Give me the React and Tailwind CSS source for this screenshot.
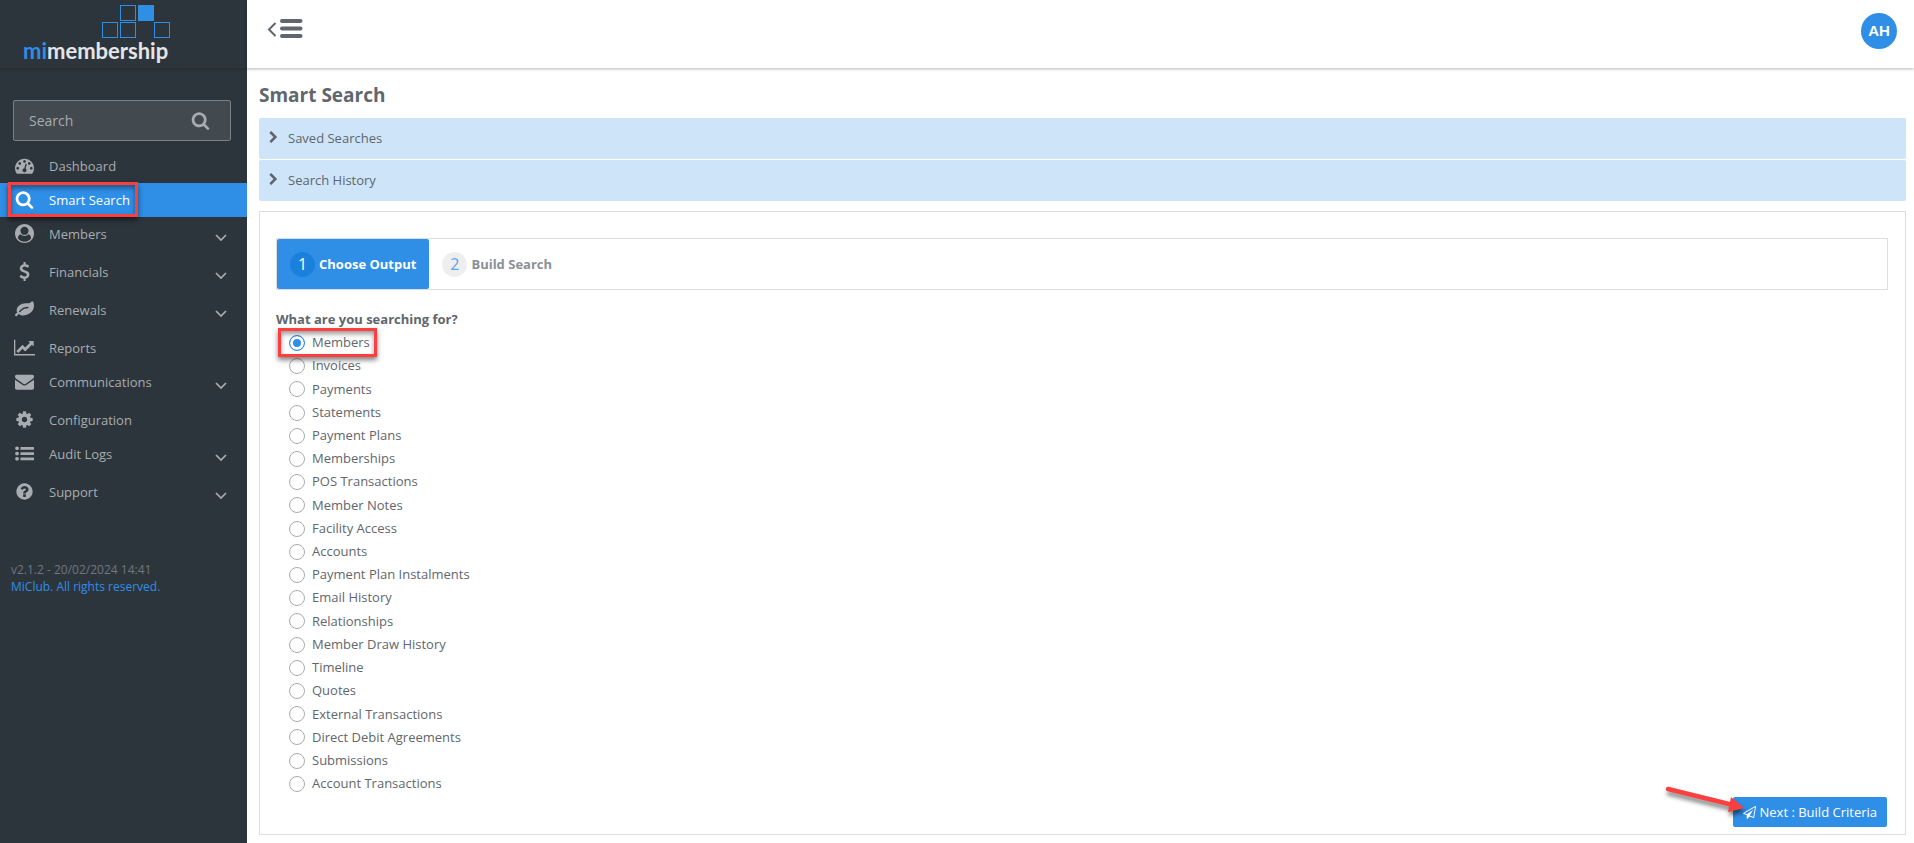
import { useState } from 'react'

const ICONS = {
  dashboard:
    'M384 1152q0-53-37.5-90.5t-90.5-37.5-90.5 37.5-37.5 90.5 37.5 90.5 90.5 37.5 90.5-37.5 37.5-90.5zm192-448q0-53-37.5-90.5t-90.5-37.5-90.5 37.5-37.5 90.5 37.5 90.5 90.5 37.5 90.5-37.5 37.5-90.5zm428 481l101-382q6-26-7.5-48.5t-38.5-29.5-48 6.5-30 39.5l-101 382q-60 5-107 43.5t-63 98.5q-20 77 20 146t117 89 146-20 89-117q16-60-6-117t-72-91zm660-33q0-53-37.5-90.5t-90.5-37.5-90.5 37.5-37.5 90.5 37.5 90.5 90.5 37.5 90.5-37.5 37.5-90.5zm-640-640q0-53-37.5-90.5t-90.5-37.5-90.5 37.5-37.5 90.5 37.5 90.5 90.5 37.5 90.5-37.5 37.5-90.5zm448 192q0-53-37.5-90.5t-90.5-37.5-90.5 37.5-37.5 90.5 37.5 90.5 90.5 37.5 90.5-37.5 37.5-90.5zm320 448q0 261-141 483-19 29-54 29h-1402q-35 0-54-29-141-221-141-483 0-182 71-348t191-286 286-191 348-71 348 71 286 191 191 286 71 348z',
  search:
    'M1152 832q0-185-131.5-316.5t-316.5-131.5-316.5 131.5-131.5 316.5 131.5 316.5 316.5 131.5 316.5-131.5 131.5-316.5zm512 832q0 52-38 90t-90 38q-54 0-90-38l-343-342q-179 124-399 124-143 0-273.5-55.5t-225-150-150-225-55.5-273.5 55.5-273.5 150-225 225-150 273.5-55.5 273.5 55.5 225 150 150 225 55.5 273.5q0 220-124 399l343 343q37 37 37 90z',
  user: 'M1523 1339q-22-155-87.5-257.5t-184.5-118.5q-67 74-159.5 115.5t-195.5 41.5-195.5-41.5-159.5-115.5q-119 16-184.5 118.5t-87.5 257.5q106 150 271 237.5t356 87.5 356-87.5 271-237.5zm-243-699q0-159-112.5-271.5t-271.5-112.5-271.5 112.5-112.5 271.5 112.5 271.5 271.5 112.5 271.5-112.5 112.5-271.5zm512 256q0 182-71 347.5t-190.5 286-285.5 191.5-349 71q-182 0-348-71t-286-191-191-286-71-348 71-348 191-286 286-191 348-71 348 71 286 191 191 286 71 348z',
  dollar:
    'M1362 1185q0 153-99.5 263.5t-258.5 136.5v175q0 14-9 23t-23 9h-135q-13 0-22.5-9.5t-9.5-22.5v-175q-66-9-127.5-31t-101.5-44.5-74-48-46.5-37.5-17.5-18q-17-21-2-41l103-135q7-10 23-12 15-2 24 9l2 2q113 99 243 125 37 8 74 8 81 0 142.5-43t61.5-122q0-28-15-53t-33.5-42-58.5-37.5-66-32-80-32.5q-39-16-61.5-25t-61.5-26.5-62.5-31-56.5-35.5-53.5-42.5-43.5-49-35.5-58-21-66.5-8.5-78q0-138 98-242t255-134v-180q0-13 9.5-22.5t22.5-9.5h135q14 0 23 9t9 23v176q57 6 110.5 23t87 33.5 63.5 37.5 39 29 15 14q17 18 5 38l-81 146q-8 15-23 16-14 3-27-7-3-3-14.5-12t-39-26.5-58.5-32-74.5-26-85.5-11.5q-95 0-155 43t-60 111q0 26 8.500 48t29.500 41.500 39.500 33 56 31 60.500 27 70 27.500q53 20 81 31.500t76 35 75.500 42.500 62 50 53 63.500 31.500 76.500 13 94z',
  leaf: 'M1280 704q0-26-19-45t-45-19q-172 0-318 49.5t-259.5 134-235.5 219.5q-19 21-19 45 0 26 19 45t45 19q24 0 45-19 27-24 74-71t67-66q137-124 268.5-176t313.5-52q26 0 45-19t19-45zm512-198q0 95-20 193-46 224-184.5 383t-357.5 268q-214 108-438 108-148 0-286-47-15-5-88-42t-96-37q-16 0-39.5 32t-45 70-52.5 70-60 32q-43 0-63.5-17.5t-45.5-59.5q-2-4-6-11t-5.5-10-3-9.5-1.5-13.5q0-35 31-73.5t68-65.5 68-56 31-48q0-4-14-38t-16-44q-9-51-9-104 0-115 43.5-220t119-184.5 170.5-139 204-95.5q55-18 145-25.5t179.5-9 178.5-6 163.5-24 113.5-56.5l29.5-29.5 29.5-28 27-20 36.5-16 43.5-4.5q39 0 70.5 46t47.5 112 24 124 8 96z',
  chart:
    'M2048 1536v128h-2048v-1536h128v1408h1920zm-128-1248v435q0 21-19.5 29.5t-35.5-7.5l-121-121-633 633q-10 10-23 10t-23-10l-233-233-416 416-192-192 585-585q10-10 23-10t23 10l233 233 464-464-121-121q-16-16-7.5-35.5t29.5-19.5h435q14 0 23 9t9 23z',
  envelope:
    'M1792 710v794q0 66-47 113t-113 47h-1472q-66 0-113-47t-47-113v-794q44 49 101 87 362 246 497 345 57 42 92.5 65.5t94.5 48 110 24.5h2q51 0 110-24.5t94.5-48 92.5-65.5q170-123 498-345 57-39 100-87zm0-294q0 79-49 151t-122 123q-376 261-468 325-10 7-42.5 31t-54 38.5-52 32.5-57.5 27-50 9h-2q-23 0-50-9t-57.5-27-52-32.5-54-38.5-42.5-31q-91-64-262-182.5t-205-142.5q-62-42-117-115.5t-55-136.5q0-78 41.5-130t118.5-52h1472q65 0 112.5 47t47.5 113z',
  cog: 'M1152 896q0-106-75-181t-181-75-181 75-75 181 75 181 181 75 181-75 75-181zm512-109v222q0 12-8 23t-20 13l-185 28q-19 54-39 91 35 50 107 138 10 12 10 25t-9 23q-27 37-99 108t-94 71q-12 0-26-9l-138-108q-44 23-91 38-16 136-29 186-7 28-36 28h-222q-14 0-24.5-8.5t-11.5-21.5l-28-184q-49-16-90-37l-141 107q-10 9-25 9-14 0-25-11-126-114-165-168-7-10-7-23 0-12 8-23 15-21 51-66.5t54-70.5q-27-50-41-99l-183-27q-13-2-21-12.5t-8-23.5v-222q0-12 8-23t19-13l186-28q14-46 39-92-40-57-107-138-10-12-10-24 0-10 9-23 26-36 98.5-107.5t94.5-71.5q13 0 26 10l138 107q44-23 91-38 16-136 29-186 7-28 36-28h222q14 0 24.5 8.5t11.5 21.5l28 184q49 16 90 37l142-107q9-9 24-9 13 0 25 10 129 119 165 170 7 8 7 22 0 12-8 23-15 21-51 66.5t-54 70.5q26 50 41 98l183 28q13 2 21 12.5t8 23.5z',
  list: 'M192 224a176 176 0 1 0 .1 0zM192 720a176 176 0 1 0 .1 0zM192 1216a176 176 0 1 0 .1 0zM544 288h1216q32 0 32 32v192q0 32-32 32h-1216q-32 0-32-32v-192q0-32 32-32zM544 784h1216q32 0 32 32v192q0 32-32 32h-1216q-32 0-32-32v-192q0-32 32-32zM544 1280h1216q32 0 32 32v192q0 32-32 32h-1216q-32 0-32-32v-192q0-32 32-32z',
  question:
    'M1024 1376v-192q0-14-9-23t-23-9h-192q-14 0-23 9t-9 23v192q0 14 9 23t23 9h192q14 0 23-9t9-23zm256-672q0-88-55.5-163t-138.5-116-170-41q-243 0-371 213-15 24 8 42l132 100q7 6 19 6 16 0 25-12 53-68 86-92 34-24 86-24 48 0 85.5 26t37.5 59q0 38-20 61t-68 45q-63 28-115.5 86.5t-52.5 125.5v36q0 14 9 23t23 9h192q14 0 23-9t9-23q0-19 21.5-49.5t54.5-49.5q32-18 49-28.5t46-35 44.5-48 28-60.5 12.5-81zm384 192q0 209-103 385.5t-279.5 279.5-385.5 103-385.5-103-279.5-279.5-103-385.5 103-385.5 279.5-279.5 385.5-103 385.5 103 279.5 279.5 103 385.5z',
  plane:
    'M1764 11q33 24 27 64l-256 1536q-5 29-32 45-14 8-31 8-11 0-24-5l-527-215-298 327q-18 21-47 21-14 0-23-4-19-7-30-23.5t-11-36.5v-452l-472-193q-37-14-40-55-3-39 32-59l1664-960q35-21 68 2zm-342 1499l221-1323-1434 827 336 137 863-639-478 797z',
  chevronRight:
    'M1363 877l-742 742q-19 19-45 19t-45-19l-166-166q-19-19-19-45t19-45l531-531-531-531q-19-19-19-45t19-45l166-166q19-19 45-19t45 19l742 742q19 19 19 45t-19 45z',
}

// Glyphs are 1792 units wide unless listed here
const ICON_WIDTHS = { chart: 2048, search: 1664 }

const NAV_ITEMS = [
  { label: 'Dashboard', icon: 'dashboard' },
  { label: 'Smart Search', icon: 'search', active: true },
  { label: 'Members', icon: 'user', children: true },
  { label: 'Financials', icon: 'dollar', children: true },
  { label: 'Renewals', icon: 'leaf', children: true },
  { label: 'Reports', icon: 'chart' },
  { label: 'Communications', icon: 'envelope', children: true },
  { label: 'Configuration', icon: 'cog' },
  { label: 'Audit Logs', icon: 'list', children: true },
  { label: 'Support', icon: 'question', children: true },
]

const OUTPUTS = [
  'Members',
  'Invoices',
  'Payments',
  'Statements',
  'Payment Plans',
  'Memberships',
  'POS Transactions',
  'Member Notes',
  'Facility Access',
  'Accounts',
  'Payment Plan Instalments',
  'Email History',
  'Relationships',
  'Member Draw History',
  'Timeline',
  'Quotes',
  'External Transactions',
  'Direct Debit Agreements',
  'Submissions',
  'Account Transactions',
]

function Icon({ name, className }) {
  return (
    <svg viewBox={`0 0 ${ICON_WIDTHS[name] || 1792} 1792`} fill="currentColor" aria-hidden="true" className={className}>
      <path d={ICONS[name]} />
    </svg>
  )
}

function Highlight({ className }) {
  return (
    <span
      aria-hidden="true"
      className={`pointer-events-none absolute z-10 border-3 border-[#fd3f3f] shadow-[0_3px_5px_rgba(0,0,0,0.5),inset_0_3px_5px_rgba(0,0,0,0.4)] ${className}`}
    />
  )
}

function Logo() {
  return (
    <a href="#" aria-label="mimembership" className="flex h-[68px] flex-col pl-[23px] shadow-[0_1px_3px_rgba(0,0,0,0.2)]">
      <svg viewBox="0 0 70 34" fill="none" stroke="#2f8ee6" className="mt-[5px] ml-[78px] h-[34px] w-[70px] shrink-0">
        <rect x="19.5" y="0.5" width="15" height="15" />
        <rect x="37.5" y="0.5" width="15" height="15" fill="#2f8ee6" />
        <rect x="1.5" y="17.5" width="15" height="15" />
        <rect x="19.5" y="17.5" width="15" height="15" />
        <rect x="53.5" y="17.5" width="15" height="15" />
      </svg>
      <span className="font-['Lato',sans-serif] text-[22px] leading-6 font-bold text-[#e4e5e6]">
        <span className="text-[#2f8ee6]">mi</span>membership
      </span>
    </a>
  )
}

function Sidebar() {
  return (
    <aside className="w-[247px] shrink-0 bg-[#2d353c] text-[13px] text-[#a8acb1]">
      <Logo />
      <form className="mr-4 mb-2 ml-[13px] mt-8 flex h-[41px] items-center rounded-xs border border-[#7b8085] bg-[#42494f] pr-5 pl-[15px]">
        <input
          type="search"
          aria-label="Search"
          placeholder="Search"
          className="min-w-0 flex-1 bg-transparent text-sm outline-none placeholder:text-[#a8acb1]"
        />
        <button type="submit" aria-label="Submit search">
          <Icon name="search" className="size-[19px]" />
        </button>
      </form>

      <nav>
        {NAV_ITEMS.map((item) => (
          <a
            key={item.label}
            href="#"
            className={`relative flex items-start pr-5 pl-[15px] leading-[34px] ${item.children ? 'h-[38px]' : 'h-[34px]'} ${item.active ? 'bg-[#2f8ee6] text-white' : ''}`}
          >
            <span className="flex h-[33px] w-[19px] items-center justify-center">
              <Icon name={item.icon} className={item.icon === 'chart' ? 'h-[19px] w-[21px] shrink-0' : 'size-[19px]'} />
            </span>
            <span className="ml-[15px] flex-1">{item.label}</span>
            {item.children && (
              <svg viewBox="0 0 12 8" fill="none" stroke="currentColor" strokeWidth="1.7" className="mt-[17px] h-2 w-3">
                <path d="M1 1l5 5 5-5" />
              </svg>
            )}
            {item.active && <Highlight className="-top-px left-2 h-[35px] w-[130px]" />}
          </a>
        ))}
      </nav>

      <div className="mt-12 pl-[11px] text-xs leading-[17px] text-[#6f767c]">
        <p>v2.1.2 - 20/02/2024 14:41</p>
        <a href="#" className="text-[#2f8ee6]">
          MiClub. All rights reserved.
        </a>
      </div>
    </aside>
  )
}

function Header() {
  return (
    <header className="flex h-[68px] items-start justify-between bg-white pt-[13px] pr-[17px] pl-5 shadow-[0_1px_3px_rgba(0,0,0,0.3)]">
      <button type="button" aria-label="Toggle menu" className="mt-[6px] text-[#5f666d]">
        <svg viewBox="0 0 36 20" fill="none" stroke="currentColor" className="h-5 w-9">
          <path d="M8.500 4L2 10.500l6.500 6.500" strokeWidth="2" />
          <path d="M15 2h18.500M15 9.500h18.500M15 17h18.500" strokeWidth="4" strokeLinecap="round" />
        </svg>
      </button>
      <button
        type="button"
        className="size-9 rounded-full bg-[#2f8ee6] font-['Liberation_Sans',sans-serif] text-[15px] font-bold text-white"
      >
        AH
      </button>
    </header>
  )
}

function Accordion({ title }) {
  return (
    <button type="button" className="flex h-[41px] w-full items-center gap-2 rounded-xs bg-[#cee4f9] pl-2 text-left text-[13px]">
      <Icon name="chevronRight" className="mb-0.5 size-[13px]" />
      {title}
    </button>
  )
}

function App() {
  const [output, setOutput] = useState('Members')

  return (
    <div className="flex min-h-screen bg-white font-['Open_Sans',sans-serif] text-[13px] text-[#5f666d]">
      <Sidebar />
      <div className="flex min-w-0 flex-1 flex-col">
        <Header />
        <main className="flex flex-1 flex-col pr-2 pb-2 pl-3">
          <h1 className="pt-[14px] pb-[10px] text-[19px] leading-[26px] font-bold">Smart Search</h1>
          <div className="flex flex-col gap-px">
            <Accordion title="Saved Searches" />
            <Accordion title="Search History" />
          </div>

          <section className="mt-[10px] flex flex-1 flex-col border border-[#dcddde] pt-[26px] pr-[17px] pb-[7px] pl-4">
            <ol className="flex h-[52px] border border-[#dcddde]">
              <li>
                <button type="button" className="flex h-full items-center gap-1 rounded-xs bg-[#2f8ee6] px-[13px] font-bold text-white">
                  <span className="flex size-[25px] items-center justify-center rounded-full bg-[#1b7fdc] text-base font-normal">1</span>
                  <span className="pt-0.5">Choose Output</span>
                </button>
              </li>
              <li>
                <button type="button" className="flex h-full items-center gap-1 px-[13px] font-bold text-[#8b9095]">
                  <span className="flex size-[25px] items-center justify-center rounded-full bg-[#eeeeee] text-base font-normal text-[#5fa5e8]">2</span>
                  <span className="pt-0.5">Build Search</span>
                </button>
              </li>
            </ol>

            <fieldset className="mt-[19px] flex flex-1 flex-col">
              <legend className="font-bold leading-5">What are you searching for?</legend>
              <div className="flex flex-1 flex-col justify-between pt-[3px] pl-[13px]">
                {OUTPUTS.map((name) => (
                  <label key={name} className="relative flex h-[22px] items-center gap-[7px] self-start">
                    <input
                      type="radio"
                      name="output"
                      checked={output === name}
                      onChange={() => setOutput(name)}
                      className="size-4 appearance-none rounded-full border border-[#a8acb1] bg-white checked:border-[#2f8ee6] checked:bg-[#2f8ee6] checked:shadow-[inset_0_0_0_3px_#ffffff]"
                    />
                    {name}
                    {name === 'Members' && <Highlight className="-top-1 -left-[11px] h-[29px] w-[99px]" />}
                  </label>
                ))}
              </div>
            </fieldset>

            <div className="relative mt-0.5 mr-px self-end">
              <button type="button" className="flex h-[30px] items-center gap-1 rounded-xs bg-[#2f8ee6] px-[10px] pt-px text-[13px] text-white">
                <Icon name="plane" className="size-[13px]" />
                Next : Build Criteria
              </button>
              <svg
                viewBox="0 0 84 32"
                fill="none"
                aria-hidden="true"
                className="pointer-events-none absolute -top-[13px] -left-[70px] h-8 w-[84px] drop-shadow-[1px_4px_2px_rgba(0,0,0,0.5)]"
              >
                <path d="M5 5L68 20.500" stroke="#fd3f3f" strokeWidth="4.500" strokeLinecap="round" />
                <path d="M68 13L81 24L65 28z" fill="#fd3f3f" />
              </svg>
            </div>
          </section>
        </main>
      </div>
    </div>
  )
}

export default App
